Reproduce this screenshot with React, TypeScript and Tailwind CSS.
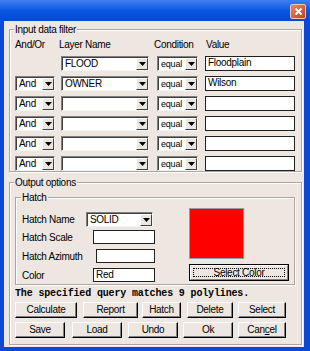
import React from "react";

const Arrow = () => (
  <svg width="7" height="4" viewBox="0 0 7 4">
    <polygon points="0,0 7,0 3.5,4" fill="#000" />
  </svg>
);

function Combo({ className, text, small }: { className: string; text?: string; small?: boolean }) {
  return (
    <div
      className={`${className} h-[15px] flex items-stretch bg-white border border-t-[#808080] border-l-[#808080] border-b-[#f4f4f4] border-r-[#f4f4f4] shadow-[inset_1px_1px_0_#404040]`}
    >
      <div className={`flex-1 pl-[3px] pt-[1px] overflow-hidden whitespace-nowrap ${small ? "text-[9px] leading-[12px] tracking-[-0.2px]" : "text-[10px] leading-[12px]"}`}>
        {text}
      </div>
      <div className="w-[12px] mt-[1px] flex items-center justify-center bg-[#ece6e0] border border-t-white border-l-white border-b-[#404040] border-r-[#404040]">
        <Arrow />
      </div>
    </div>
  );
}

function TextBox({ className, text }: { className: string; text?: string }) {
  return (
    <div className={`${className} bg-white border border-[#202020] pl-[2px] text-[10px] leading-[12px] whitespace-nowrap overflow-hidden`}>
      {text}
    </div>
  );
}

function Btn({ className, children }: { className: string; children: React.ReactNode }) {
  return (
    <div
      className={`${className} h-[16px] flex items-center justify-center border border-t-white border-l-white border-r-black border-b-black shadow-[inset_-1px_-1px_0_#808080] text-[10px] leading-none`}
    >
      {children}
    </div>
  );
}

function FilterRow({ andor, layer, value }: { andor?: string; layer?: string; value?: string }) {
  return (
    <div className="flex h-[15px]">
      {andor ? <Combo className="w-[40px]" text={andor} /> : <div className="w-[40px]" />}
      <Combo className="w-[88px] ml-[6px]" text={layer} />
      <Combo className="w-[41px] ml-[8px]" text="equal" small />
      <TextBox className="w-[90px] h-[15px] ml-[7px]" text={value} />
    </div>
  );
}

export default function App() {
  return (
    <div className="w-[310px] h-[351px] flex flex-col bg-[#0a48d6] overflow-hidden text-black text-[10px] tracking-[-0.3px] font-['Liberation_Sans',sans-serif]">
      <div className="h-[21px] shrink-0 flex items-start justify-end pt-[4px] pr-[4px] bg-linear-to-b from-[#3f7ff2] via-[#0a56e4] to-[#0847d2]">
        <div className="w-[16px] h-[15px] rounded-[2px] border border-[#f2c8b8] bg-linear-to-br from-[#e8886a] to-[#c83a1c] flex items-center justify-center">
          <svg width="9" height="9" viewBox="0 0 9 9">
            <path d="M1.5 1.5L7.5 7.5M7.5 1.5L1.5 7.5" stroke="#fff" strokeWidth="1.8" />
          </svg>
        </div>
      </div>
      <div className="flex-1 flex flex-col ml-[4px] mr-[6px] mb-[4px] bg-[#eee7e1] pl-[5px] pr-[2px] pt-[2px]">
        <fieldset className="border border-[#ada59d] shadow-[inset_1px_1px_0_#fff,1px_1px_0_#fff] pl-[5px] pr-[5px] pb-0">
          <legend className="ml-[-1px] px-[1px] bg-[#eee7e1] leading-[13px]">Input data filter</legend>
          <div className="flex h-[13px] leading-[13px] mt-[2px]">
            <div className="w-[44px]">And/Or</div>
            <div className="w-[95px]">Layer Name</div>
            <div className="w-[52px]">Condition</div>
            <div>Value</div>
          </div>
          <div className="flex flex-col gap-[5px] mt-[5px]">
            <FilterRow layer="FLOOD" value="Floodplain" />
            <FilterRow andor="And" layer="OWNER" value="Wilson" />
            <FilterRow andor="And" />
            <FilterRow andor="And" />
            <FilterRow andor="And" />
            <FilterRow andor="And" />
          </div>
        </fieldset>

        <fieldset className="mt-[4px] border border-[#ada59d] shadow-[inset_1px_1px_0_#fff,1px_1px_0_#fff] pl-[5px] pr-[6px] pb-[6px]">
          <legend className="ml-[-1px] px-[1px] bg-[#eee7e1] leading-[13px]">Output options</legend>
          <fieldset className="mt-[2px] border border-[#ada59d] shadow-[inset_1px_1px_0_#fff,1px_1px_0_#fff] pl-[6px] pr-[4px] pb-[2px]">
            <legend className="ml-[-1px] px-[1px] bg-[#eee7e1] leading-[13px]">Hatch</legend>
            <div className="flex items-start">
              <div className="flex flex-col mt-[8px] w-[133px]">
                <div className="flex items-center h-[14px]">
                  <div className="w-[64px]">Hatch Name</div>
                  <Combo className="w-[67px]" text="SOLID" />
                </div>
                <div className="flex items-center h-[14px] mt-[4px]">
                  <div className="w-[71px]">Hatch Scale</div>
                  <TextBox className="w-[62px] h-[14px]" />
                </div>
                <div className="flex items-center h-[14px] mt-[5px]">
                  <div className="w-[74px]">Hatch Azimuth</div>
                  <TextBox className="w-[59px] h-[14px]" />
                </div>
                <div className="flex items-center h-[14px] mt-[5px]">
                  <div className="w-[71px]">Color</div>
                  <TextBox className="w-[62px] h-[14px]" text="Red" />
                </div>
              </div>
              <div className="flex flex-col ml-[34px] mt-[4px]">
                <div className="w-[55px] h-[51px] bg-[#ff0000] border border-[#9a9a9a]" />
                <div className="mt-[5px] w-[100px] h-[17px] border border-black">
                  <div className="w-full h-full p-[2px] border border-t-white border-l-white border-r-[#808080] border-b-[#808080]">
                    <div className="w-full h-full border border-dotted border-black flex items-center justify-center leading-none">
                      Select Color
                    </div>
                  </div>
                </div>
              </div>
            </div>
          </fieldset>
          <div className="mt-[2px] h-[13px] leading-[13px] text-[10px] font-bold tracking-[-0.15px] font-['Liberation_Mono',monospace] whitespace-nowrap">
            The specified query matches 9 polylines.
          </div>
          <div className="flex mt-[2px]">
            <Btn className="w-[62px]">Calculate</Btn>
            <Btn className="w-[55px] ml-[6px]">Report</Btn>
            <Btn className="w-[39px] ml-[4px]">Hatch</Btn>
            <Btn className="w-[46px] ml-[6px]">Delete</Btn>
            <Btn className="w-[48px] ml-[5px]">Select</Btn>
          </div>
          <div className="flex mt-[4px]">
            <Btn className="w-[50px]">Save</Btn>
            <Btn className="w-[50px] ml-[7px]">Load</Btn>
            <Btn className="w-[50px] ml-[6px]">Undo</Btn>
            <Btn className="w-[50px] ml-[5px]">Ok</Btn>
            <Btn className="w-[48px] ml-[5px]">
              <span>
                Can<span className="underline">c</span>el
              </span>
            </Btn>
          </div>
        </fieldset>
      </div>
    </div>
  );
}
